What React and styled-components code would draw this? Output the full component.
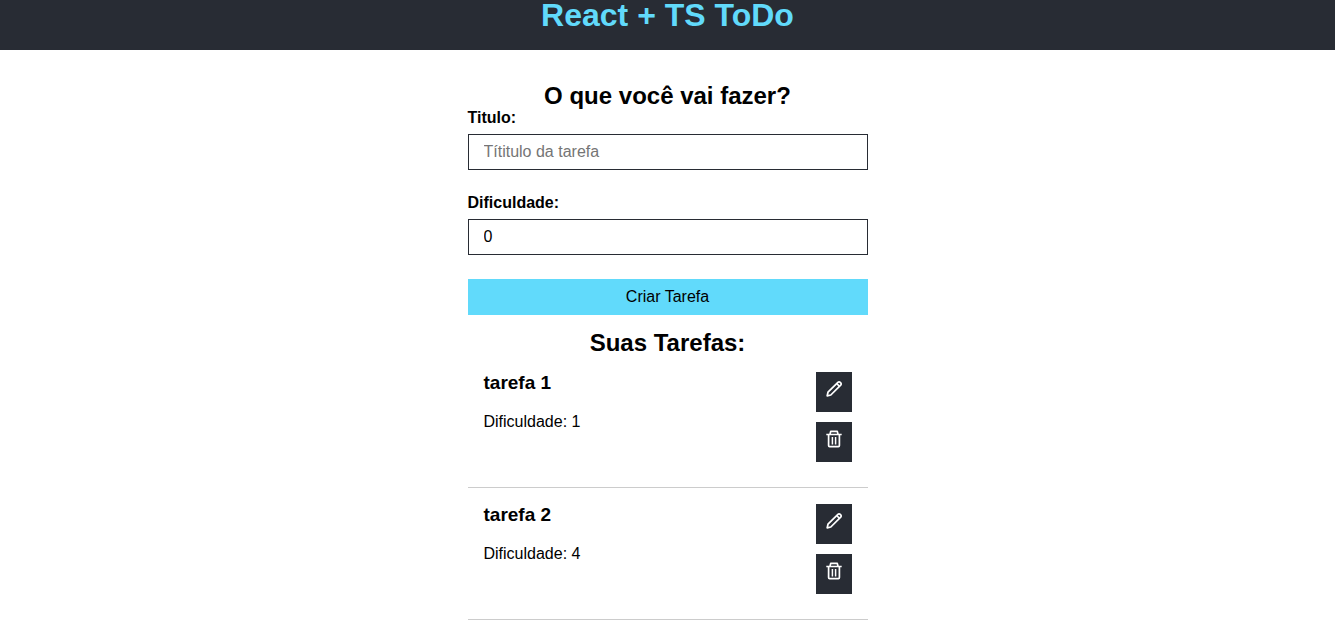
import React from "react";
import styled, { createGlobalStyle } from "styled-components";

const GlobalStyle = createGlobalStyle`
  * { box-sizing: border-box; margin: 0; padding: 0; }
  body {
    background: #fff;
    color: #000;
    font-family: Arial, "Liberation Sans", sans-serif;
    font-size: 16px;
    line-height: 18px;
  }
`;

const Header = styled.header`
  background: #282c34;
  padding-bottom: 20px;
  text-align: center;
`;

const Brand = styled.h1`
  color: #61dafb;
  font-size: 32px;
  line-height: 30px;
`;

const Main = styled.main`
  width: 100%;
  max-width: 400px;
  margin: 0 auto;
  padding-top: 32px;
`;

const SectionTitle = styled.h2`
  font-size: 24px;
  line-height: 27px;
  text-align: center;
`;

const Form = styled.form`
  display: flex;
  flex-direction: column;
  gap: 24px;
  margin-bottom: 14px;
`;

const Field = styled.div`
  display: flex;
  flex-direction: column;
  gap: 7px;
`;

const Label = styled.label`
  font-weight: bold;
`;

const Input = styled.input`
  width: 100%;
  height: 36px;
  padding: 0 15px;
  border: 1px solid #282c34;
  border-radius: 0;
  background: #fff;
  color: #000;
  font: inherit;

  &::placeholder { color: #757575; }
`;

const SubmitButton = styled.button`
  height: 36px;
  border: 0;
  background: #61dafb;
  color: #000;
  font: inherit;
  cursor: pointer;
`;

const TaskList = styled.ul`
  list-style: none;
`;

const Task = styled.li`
  display: flex;
  justify-content: space-between;
  padding: 16px 16px 25px;
  border-bottom: 1px solid #ccc;
`;

const Details = styled.div`
  display: flex;
  flex-direction: column;
  gap: 20px;
`;

const TaskTitle = styled.h3`
  font-size: 19px;
  line-height: 21px;
`;

const Actions = styled.div`
  display: flex;
  flex-direction: column;
  gap: 10px;
`;

const IconButton = styled.button`
  display: flex;
  align-items: flex-start;
  justify-content: center;
  width: 36px;
  height: 40px;
  padding-top: 8px;
  border: 0;
  background: #282c34;
  color: #fff;
  cursor: pointer;
`;

const PencilIcon = () => (
  <svg width="18" height="18" viewBox="0 0 18 18" fill="none" stroke="currentColor" strokeWidth="1.7" strokeLinejoin="round" aria-hidden="true">
    <path d="M2.2 15.8 3 12.2 12.9 2.3a1.6 1.6 0 0 1 2.3 0l.5.5a1.6 1.6 0 0 1 0 2.3L5.8 15Z" />
    <path d="m11.7 3.5 2.8 2.8" />
  </svg>
);

const TrashIcon = () => (
  <svg width="18" height="18" viewBox="0 0 18 18" fill="none" stroke="currentColor" strokeWidth="1.7" strokeLinejoin="round" aria-hidden="true">
    <path d="M1.3 4.5h15.4M5 4.2 5.7 1.4h6.6l.7 2.8M3.6 4.8v10.8q0 1 1 1h8.8q1 0 1-1V4.8" />
    <path d="M7.4 7v7.4M10.6 7v7.4" strokeWidth="1.5" />
  </svg>
);

const tasks = [
  { id: 1, title: "tarefa 1", difficulty: 1 },
  { id: 2, title: "tarefa 2", difficulty: 4 },
];

export default function App() {
  return (
    <>
      <GlobalStyle />
      <Header>
        <Brand>React + TS ToDo</Brand>
      </Header>
      <Main>
        <SectionTitle>O que você vai fazer?</SectionTitle>
        <Form onSubmit={(event) => event.preventDefault()}>
          <Field>
            <Label htmlFor="title">Titulo:</Label>
            <Input id="title" type="text" placeholder="Títitulo da tarefa" />
          </Field>
          <Field>
            <Label htmlFor="difficulty">Dificuldade:</Label>
            <Input id="difficulty" type="text" inputMode="numeric" defaultValue="0" />
          </Field>
          <SubmitButton type="submit">Criar Tarefa</SubmitButton>
        </Form>
        <SectionTitle>Suas Tarefas:</SectionTitle>
        <TaskList>
          {tasks.map((task) => (
            <Task key={task.id}>
              <Details>
                <TaskTitle>{task.title}</TaskTitle>
                <p>Dificuldade: {task.difficulty}</p>
              </Details>
              <Actions>
                <IconButton type="button" aria-label={`Editar ${task.title}`}>
                  <PencilIcon />
                </IconButton>
                <IconButton type="button" aria-label={`Excluir ${task.title}`}>
                  <TrashIcon />
                </IconButton>
              </Actions>
            </Task>
          ))}
        </TaskList>
      </Main>
    </>
  );
}
